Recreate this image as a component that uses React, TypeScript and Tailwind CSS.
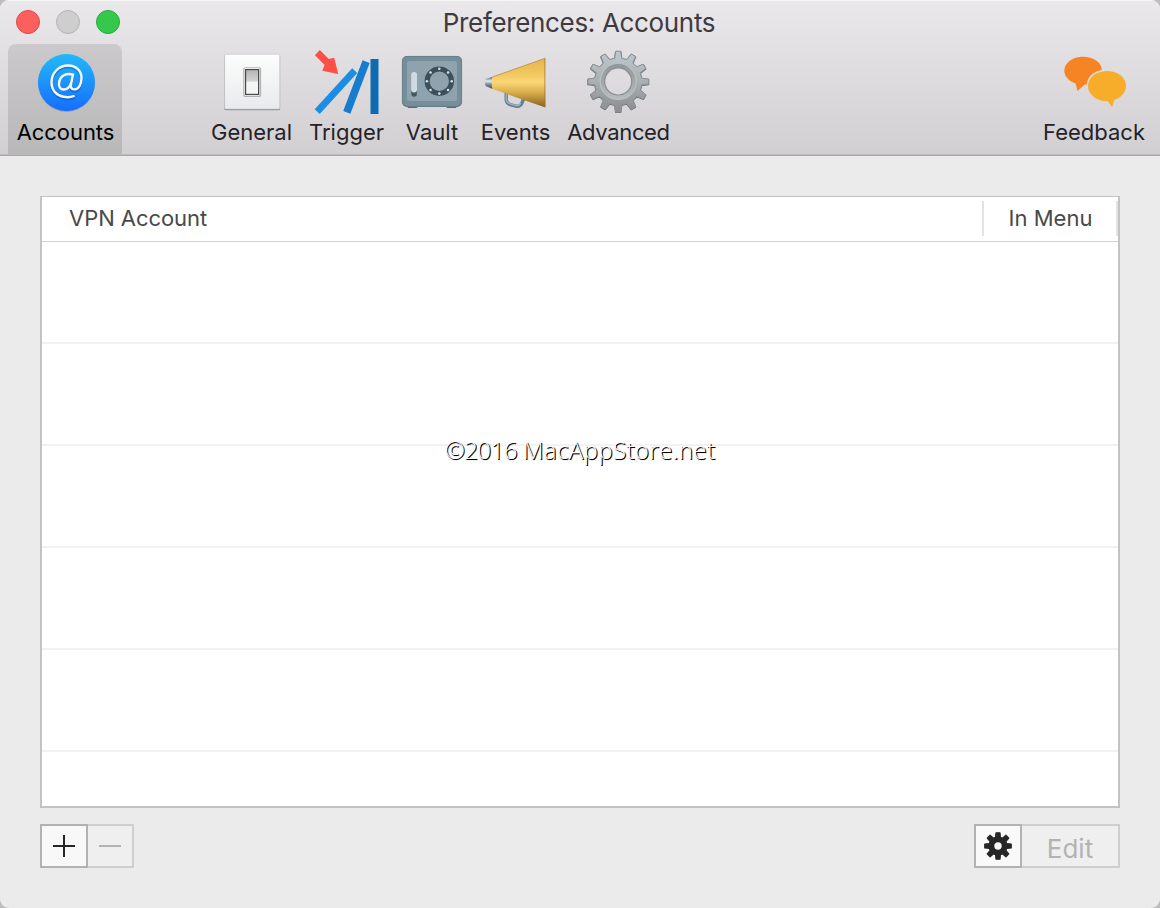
import React from "react";

type ItemProps = {
  label: string;
  width: string;
  tracking: string;
  selected?: boolean;
  children: React.ReactNode;
};

function ToolbarItem({ label, width, tracking, selected, children }: ItemProps) {
  return (
    <button
      className={`flex h-[110px] shrink-0 flex-col items-center ${width} ${
        selected ? "rounded-t-lg bg-linear-to-b from-[#cbc9cb] to-[#b9b8b9] text-black" : "text-[#242226]"
      }`}
    >
      <svg width="76" height="72" viewBox="0 0 76 72" className="block shrink-0">
        {children}
      </svg>
      <span className={`mt-[1px] whitespace-nowrap text-[22px] leading-[30px] ${tracking}`}>{label}</span>
    </button>
  );
}

function gearPath(cx: number, cy: number, n: number, inner: number, outer: number, base: number, tip: number) {
  const parts: string[] = [];
  for (let i = 0; i < n; i++) {
    const a = (i * 2 * Math.PI) / n - Math.PI / 2;
    const at = (r: number, o: number) => `${(cx + r * Math.cos(a + o)).toFixed(2)} ${(cy + r * Math.sin(a + o)).toFixed(2)}`;
    parts.push(`${i ? "L" : "M"}${at(inner, -base)}L${at(outer, -tip)}L${at(outer, tip)}L${at(inner, base)}`);
  }
  return parts.join("") + "Z";
}

function AccountsIcon() {
  return (
    <g transform="translate(.5 0)">
      <defs>
        <linearGradient id="blue" x1="0" y1="0" x2="0" y2="1">
          <stop offset="0" stopColor="#22b9f8" />
          <stop offset="1" stopColor="#156eff" />
        </linearGradient>
      </defs>
      <circle cx="39" cy="39.4" r="28.5" fill="#000" opacity=".16" />
      <circle cx="39" cy="38.5" r="28.5" fill="url(#blue)" />
      <g fill="none" strokeLinecap="round" transform="translate(0 1)" stroke="#0a4fae" opacity=".45" strokeWidth="2.4">
        <path d="M46.5 53.2C43 54.3 39.5 54.4 36 53.7C28.2 52.2 24 46.5 24 39.5C24 30 31 22.4 40.5 22.4C48.8 22.4 54 28 54 35.2C54 41.8 50.8 46.3 46.7 46.3C43.6 46.3 43 43.9 43.5 41.4L45.2 32" />
      </g>
      <g fill="none" stroke="#f6f7f8" strokeWidth="2.4" strokeLinecap="round">
        <path d="M46.2 52.2C43 53.3 39.5 53.5 36 52.8C28.2 51.3 24 45.6 24 38.6C24 29.1 31 21.5 40.5 21.5C48.8 21.5 54 27.1 54 34.3C54 40.9 50.8 45.4 46.7 45.4C43.6 45.4 43 43 43.5 40.5L45.4 30.6C39.5 28.7 32 31.1 31.5 39.6C31.2 43.6 33.2 45.5 36 45.5C39.8 45.5 42.5 42.7 43.7 38.5" />
      </g>
    </g>
  );
}

function GeneralIcon() {
  return (
    <>
      <defs>
        <linearGradient id="plate" x1="0" y1="0" x2="0" y2="1">
          <stop offset="0" stopColor="#fdfdfd" />
          <stop offset="1" stopColor="#e8eaeb" />
        </linearGradient>
        <linearGradient id="rocker" x1="0" y1="0" x2="0" y2="1">
          <stop offset="0" stopColor="#b4b4b2" />
          <stop offset=".47" stopColor="#d3d3d2" />
          <stop offset=".5" stopColor="#f7f7f7" />
          <stop offset="1" stopColor="#f3f3f3" />
        </linearGradient>
      </defs>
      <rect x="10.3" y="10.5" width="55.8" height="55.7" rx="1.5" fill="#929497" />
      <rect x="10.6" y="10.2" width="55.2" height="54.8" rx="1" fill="url(#plate)" stroke="#bfc2c4" strokeWidth=".5" />
      <rect x="29.3" y="23.4" width="17.8" height="29.6" rx="1.5" fill="#b7bbbc" />
      <rect x="30.1" y="23.8" width="16" height="28.2" rx="1" fill="#fafafa" stroke="#929797" strokeWidth=".5" />
      <rect x="31.6" y="25.6" width="13" height="24.8" fill="url(#rocker)" stroke="#454c4b" strokeWidth="1.2" />
    </>
  );
}

function TriggerIcon() {
  return (
    <g transform="translate(-1 0)">
      <path fill="#fc5048" d="M11.8 6L20.8 14.9L26.2 13.8L30.2 30L14.3 26.8L16.6 20.9L6.9 11.2Z" />
      <path d="M9.2 67.6L46.7 26.6" stroke="#1b8de5" strokeWidth="6.8" />
      <path d="M38.8 68.4L58.1 17.6" stroke="#167dce" strokeWidth="7.6" />
      <path d="M62.5 15h8v55h-8z" fill="#0e6bb1" />
    </g>
  );
}

function VaultIcon() {
  return (
    <>
      <path d="M13.5 61h10v2q0 1-1 1h-8q-1 0-1-1zM52.5 61h10v2q0 1-1 1h-8q-1 0-1-1z" fill="#526872" />
      <rect x="8" y="12" width="60" height="51" rx="5" fill="#566c77" />
      <rect x="8.4" y="12.4" width="59.2" height="49.8" rx="4.8" fill="#748e9a" stroke="#6b8490" strokeWidth=".8" />
      <rect x="13" y="17" width="50" height="40" rx="2.5" fill="#8fa3ae" />
      <path d="M17.3 46v4a2.8 2.8 0 0 0 5.6 0v-4z" fill="#435a66" />
      <rect x="17.2" y="28" width="5.8" height="20.5" rx="2.9" fill="#d0dbe1" />
      <circle cx="45.3" cy="37.2" r="12.2" fill="none" stroke="#3d505a" strokeWidth="5" />
      {[0, 1, 2, 3, 4, 5, 6, 7].map((i) => (
        <circle key={i} cx={45.3 + 12.4 * Math.cos((i * Math.PI) / 4)} cy={37.2 + 12.4 * Math.sin((i * Math.PI) / 4)} r="1.3" fill="#d5e0e5" />
      ))}
    </>
  );
}

function EventsIcon() {
  return (
    <>
      <defs>
        <linearGradient id="gold" x1="0" y1="0" x2="0" y2="1">
          <stop offset="0" stopColor="#e3b450" />
          <stop offset=".36" stopColor="#f4ca62" />
          <stop offset=".48" stopColor="#fbd878" />
          <stop offset=".68" stopColor="#dcb04e" />
          <stop offset="1" stopColor="#896020" />
        </linearGradient>
        <linearGradient id="metal" x1="0" y1="0" x2="0" y2="1">
          <stop offset="0" stopColor="#49616e" />
          <stop offset=".35" stopColor="#e4eef4" />
          <stop offset=".6" stopColor="#7894a6" />
          <stop offset="1" stopColor="#394c58" />
        </linearGradient>
      </defs>
      <path d="M28.2 49V56Q28.8 59.5 32 60.6L38 62.2Q42 62.8 43.6 59.8L46 54" fill="none" stroke="#637f90" strokeWidth="3.4" />
      <path d="M28.2 50V56Q29 59 32.3 60L38 61.6Q41.3 61.9 42.8 59.2" fill="none" stroke="#a6bbc7" strokeWidth="1.2" />
      <path d="M7.5 35Q6 38.5 7.6 42L14.7 45V32.8Z" fill="url(#metal)" />
      <path d="M14.5 33L67.4 14.2V63.5L14.5 45Q12.8 39 14.5 33Z" fill="url(#gold)" />
      <path d="M66.8 14.4V63.1" stroke="#9a722b" strokeWidth="1.2" opacity=".55" />
      <path d="M14.5 33L67.4 14.2" stroke="#b88c3c" strokeWidth=".8" />
    </>
  );
}

function AdvancedIcon() {
  const d = gearPath(37.2, 37.5, 12, 23.6, 30.4, 0.145, 0.08);
  return (
    <>
      <defs>
        <linearGradient id="steel" x1="0" y1="0" x2="0" y2="1">
          <stop offset="0" stopColor="#bdc9cf" />
          <stop offset=".5" stopColor="#abafb1" />
          <stop offset="1" stopColor="#8b8d8f" />
        </linearGradient>
        <linearGradient id="ring" x1="0" y1="0" x2="0" y2="1">
          <stop offset="0" stopColor="#909598" />
          <stop offset="1" stopColor="#b9bcbd" />
        </linearGradient>
        <mask id="gearhole">
          <rect width="76" height="76" fill="white" />
          <circle cx="37.2" cy="37.5" r="12.9" fill="black" />
        </mask>
      </defs>
      <g mask="url(#gearhole)">
        <path d={d} transform="translate(0 .5)" fill="#74787b" stroke="#74787b" strokeWidth="1.6" strokeLinejoin="round" />
        <path d={d} fill="url(#steel)" stroke="#8d959a" strokeWidth="1" strokeLinejoin="round" />
        <circle cx="37.2" cy="37.5" r="18" fill="url(#ring)" stroke="#b9c1c5" strokeWidth="1.2" />
        <circle cx="37.2" cy="37.5" r="13.4" fill="none" stroke="#8a8e90" strokeWidth="1.4" />
      </g>
    </>
  );
}

function FeedbackIcon() {
  return (
    <>
      <path fill="#f68424" d="M27 12.8C37.1 12.8 45.6 18.1 45.8 25.9C37.4 27.1 31.2 33 30.8 40.4H28.9L21.5 47L19.6 39.4C12.8 37.3 8.3 32.4 8.3 26.8C8.3 19 16.6 12.8 27 12.8Z" />
      <path fill="#f7ad2a" d="M51.2 27C61.8 27 70 33.5 70 42C70 48.3 65 54 58.2 56L56.1 63.2L52 57.2C40.9 57.5 32 50.8 32 42C32 33.5 40.3 27 51.2 27Z" />
    </>
  );
}

export default function App() {
  return (
    <div className="h-[908px] w-[1160px] overflow-hidden bg-[#bdbdbd] font-['Inter','Liberation_Sans',sans-serif]">
      <main className="flex h-full flex-col overflow-hidden rounded-[9px] bg-[#ebebeb]">
        <header className="flex h-[156px] shrink-0 flex-col bg-linear-to-b from-[#eae8eb] to-[#d1cfd2] shadow-[inset_0_1px_0_#f7f6f7]">
          <div className="grid h-11 shrink-0 grid-cols-[1fr_auto_1fr] items-center">
            <div className="flex gap-4 pl-4">
              <span className="size-6 rounded-full border border-[#e3484a] bg-[#fc605c]" />
              <span className="size-6 rounded-full border border-[#b5b3b5] bg-[#cfcecf]" />
              <span className="size-6 rounded-full border border-[#26ad37] bg-[#34c94a]" />
            </div>
            <h1 className="relative left-[-1px] top-[1px] whitespace-nowrap text-[26px] leading-8 tracking-[-0.34px] text-[#3d3b3f]">
              Preferences: Accounts
            </h1>
          </div>
          <nav className="flex pl-2 pr-[6px]">
            <ToolbarItem label="Accounts" width="w-[114px]" tracking="tracking-[-0.05px] pl-[1px]" selected>
              <AccountsIcon />
            </ToolbarItem>
            <div className="w-20 shrink-0" />
            <ToolbarItem label="General" width="w-[99px]" tracking="tracking-[0px]">
              <GeneralIcon />
            </ToolbarItem>
            <ToolbarItem label="Trigger" width="w-[91px]" tracking="tracking-[0px]">
              <TriggerIcon />
            </ToolbarItem>
            <ToolbarItem label="Vault" width="w-[80px]" tracking="tracking-[0px]">
              <VaultIcon />
            </ToolbarItem>
            <ToolbarItem label="Events" width="w-[87px]" tracking="tracking-[0px]">
              <EventsIcon />
            </ToolbarItem>
            <ToolbarItem label="Advanced" width="w-[119px]" tracking="tracking-[-0.35px]">
              <AdvancedIcon />
            </ToolbarItem>
            <div className="flex-1" />
            <ToolbarItem label="Feedback" width="w-[120px]" tracking="tracking-[0px]">
              <FeedbackIcon />
            </ToolbarItem>
          </nav>
          <div className="h-[2px] shrink-0 border-b border-[#a8a6a8] bg-[#bcbabc]" />
        </header>

        <section className="relative mx-10 mt-10 flex h-[612px] shrink-0 flex-col border-2 border-t border-[#c3c3c3] bg-white">
          <div className="flex h-[45px] shrink-0 border-b border-[#cfcfcf] text-[22px] leading-[30px] text-[#49494a]">
            <div className="flex-1 pl-[27px] pt-[6px] tracking-[-0.05px]">VPN Account</div>
            <div className="mt-1 flex h-[35px] w-[136px] justify-center border-x-2 border-[#e3e3e3] pl-[1px] pt-[2px] tracking-[0px]">
              In Menu
            </div>
          </div>
          {[0, 1, 2, 3, 4].map((row) => (
            <div key={row} className="h-[102px] shrink-0 border-b-2 border-[#f2f2f2]" />
          ))}
          <div className="absolute inset-x-0 top-[237px] text-center">
            <span className="inline-block whitespace-nowrap font-['Open_Sans','Noto_Sans',sans-serif] text-[24px] font-light leading-8 tracking-[0.4px] text-white [text-shadow:1px_1px_0_#000,1px_1px_1px_rgba(0,0,0,0.6)]">
              <span className="tracking-[-0.5px]">©2016 </span>MacAppStore.net
            </span>
          </div>
        </section>

        <footer className="mt-4 flex justify-between px-10">
          <div className="flex h-11">
            <button className="flex w-12 items-center justify-center border-2 border-[#b2b2b2] bg-[#f8f8f8]">
              <svg width="22" height="22" viewBox="0 0 22 22">
                <path d="M11 0v22M0 11h22" stroke="#262626" strokeWidth="2" />
              </svg>
            </button>
            <button className="flex w-[46px] items-center justify-center border-2 border-l-0 border-[#cecece] bg-[#efefef]">
              <svg width="22" height="22" viewBox="0 0 22 22">
                <path d="M0 11h22" stroke="#b2b2b2" strokeWidth="2" />
              </svg>
            </button>
          </div>
          <div className="flex h-11">
            <button className="flex w-12 items-center justify-center border-2 border-[#b2b2b2] bg-[#f9f9f9]">
              <svg width="28" height="28" viewBox="0 0 28 28">
                <path
                  d={gearPath(14, 14, 8, 9, 13.4, 0.27, 0.15)}
                  fill="#262626"
                  stroke="#262626"
                  strokeWidth="1.2"
                  strokeLinejoin="round"
                />
                <circle cx="14" cy="14" r="3.7" fill="#f9f9f9" />
              </svg>
            </button>
            <button className="flex w-[98px] justify-center border-2 border-l-0 border-[#cecece] bg-[#efefef] pt-[7px] text-[26px] leading-8 tracking-[0px] text-[#b3b3b3]">
              Edit
            </button>
          </div>
        </footer>
      </main>
    </div>
  );
}
